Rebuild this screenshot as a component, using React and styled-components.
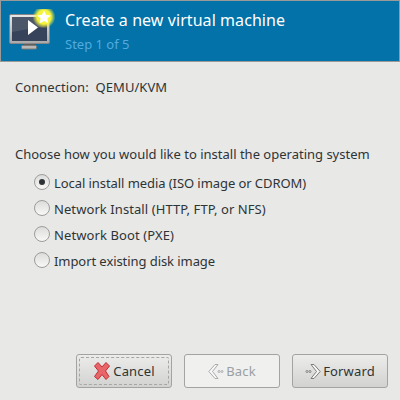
import React from 'react'
import styled, { createGlobalStyle } from 'styled-components'

const GlobalStyle = createGlobalStyle`
  html, body {
    margin: 0;
    padding: 0;
    background: #e8e8e7;
  }
`

const OPTIONS = [
  { label: 'Local install media (ISO image or CDROM)', checked: true, tracking: -0.07 },
  { label: 'Network Install (HTTP, FTP, or NFS)', tracking: 0.08 },
  { label: 'Network Boot (PXE)', tracking: 0.1 },
  { label: 'Import existing disk image', tracking: -0.07 },
]

const Window = styled.div`
  width: 400px;
  height: 400px;
  box-sizing: border-box;
  display: flex;
  flex-direction: column;
  background: #e8e8e7;
  color: #2e3436;
  font-family: 'Noto Sans', sans-serif;
  font-size: 13px;
  overflow: hidden;
`
const Header = styled.header`
  height: 60px;
  flex: none;
  margin: 1px 1px 0;
  display: flex;
  align-items: center;
  gap: 8px;
  padding-left: 8px;
  background: #0272a8;
  box-shadow: 0 0 0 1px #9a9a98;
`
const HeaderText = styled.div`
  display: flex;
  flex-direction: column;
  gap: 4px;
  margin-top: -1px;
`
const Title = styled.div`
  color: #fff;
  font-size: 16px;
  line-height: 22px;
  letter-spacing: 0.07px;
`
const Step = styled.div`
  color: #52abe0;
  font-size: 13px;
  line-height: 18px;
`
const Body = styled.main`
  flex: 1;
  display: flex;
  flex-direction: column;
  padding: 0 15px;
`
const Connection = styled.div`
  margin-top: 17px;
  line-height: 18px;
  white-space: pre;
  letter-spacing: 0.05px;
`
const Prompt = styled.div`
  margin-top: 49px;
  line-height: 18px;
`
const OptionList = styled.div`
  display: flex;
  flex-direction: column;
  gap: 8px;
  margin-top: 10px;
  padding-left: 19px;
`
const Option = styled.label`
  display: flex;
  align-items: center;
  gap: 4px;
  height: 18px;
  line-height: 18px;
`
const OptionLabel = styled.span`
  padding-top: 2px;
  letter-spacing: ${(p) => p.$tracking}px;
`
const Radio = styled.span`
  width: 16px;
  height: 16px;
  box-sizing: border-box;
  flex: none;
  display: flex;
  align-items: center;
  justify-content: center;
  border: 1px solid #9c9c9a;
  border-radius: 50%;
  background: linear-gradient(#dcdcda, #f8f8f7);
  &::after {
    content: '';
    display: ${(p) => (p.$checked ? 'block' : 'none')};
    width: 6px;
    height: 6px;
    border-radius: 50%;
    background: #2e3436;
  }
`
const Footer = styled.footer`
  flex: none;
  display: flex;
  justify-content: flex-end;
  gap: 12px;
  padding: 0 12px 12px 0;
`
const Button = styled.button`
  position: relative;
  width: 96px;
  height: 34px;
  box-sizing: border-box;
  display: flex;
  align-items: center;
  justify-content: center;
  gap: 2px;
  padding: 0;
  border: 1px solid #a3a3a0;
  border-radius: 3px;
  background: ${(p) =>
    p.disabled ? '#f0f0ef' : 'linear-gradient(#ececeb, #d2d2d0)'};
  color: ${(p) => (p.disabled ? '#9aa0a2' : '#2e3436')};
  font-family: inherit;
  font-size: 13px;
  letter-spacing: 0.15px;
  &::after {
    content: '';
    display: ${(p) => (p.$focused ? 'block' : 'none')};
    position: absolute;
    inset: 2px;
    border: 1px dashed #a6a6a4;
    border-radius: 2px;
  }
`

const MachineIcon = () => (
  <svg width="48" height="44" viewBox="0 0 48 44">
    <defs>
      <linearGradient id="bezel" x1="0" y1="0" x2="0" y2="1">
        <stop offset="0" stopColor="#e8e8e6" />
        <stop offset="1" stopColor="#a8a8a6" />
      </linearGradient>
      <radialGradient id="glow">
        <stop offset="0.6" stopColor="#f6f43a" />
        <stop offset="1" stopColor="#f6f43a" stopOpacity="0" />
      </radialGradient>
    </defs>
    <rect x="0.5" y="5.5" width="40" height="29" rx="1.5" fill="url(#bezel)" stroke="#85858a" />
    <rect x="3" y="8" width="35" height="24" fill="#36435a" />
    <path d="M3 8H38V17Q20 20 3 23Z" fill="#4c586a" />
    <path d="M19 11L29 18.5L19 26Z" fill="#fff" />
    <rect x="15" y="35" width="11" height="2" fill="#5f5f5d" />
    <rect x="12.5" y="36.5" width="15" height="3.5" rx="1" fill="#b8b8b6" stroke="#7a7a78" />
    <circle cx="35" cy="8" r="11.5" fill="url(#glow)" />
    <path d="M35 1.5L37.1 5.8L41.8 6.4L38.4 9.6L39.3 14.2L35 12L30.7 14.2L31.6 9.6L28.2 6.4L32.9 5.8Z" fill="#fff" />
  </svg>
)

const CancelIcon = () => (
  <svg width="18" height="20" viewBox="0 0 18 20">
    <path
      d="M1.5 5L5 1.5L9 6L13 1.5L16.5 5L12.5 10L16 15.5L13 18.5L9 13.5L5 18.5L1.5 15.5L5.5 10Z"
      fill="#e8666a"
      stroke="#c22f33"
    />
  </svg>
)

const BackIcon = () => (
  <svg width="16" height="15" viewBox="0 0 16 15" fill="#f7f7f6" stroke="#a8acad">
    <path d="M7 0.5L0.8 7.5L7 14.5L10 14.5L4.5 7.5L10 0.5Z" />
    <circle cx="11" cy="7.5" r="1" />
    <circle cx="14" cy="7.5" r="1" />
  </svg>
)

const ForwardIcon = () => (
  <svg width="16" height="15" viewBox="0 0 16 15" fill="#f7f7f6" stroke="#7d7d7b">
    <circle cx="2" cy="7.5" r="1" />
    <circle cx="5" cy="7.5" r="1" />
    <path d="M9 0.5L15.2 7.5L9 14.5L6 14.5L11.5 7.5L6 0.5Z" />
  </svg>
)

const App = () => {
  return (
    <Window>
      <GlobalStyle />
      <Header>
        <MachineIcon />
        <HeaderText>
          <Title>Create a new virtual machine</Title>
          <Step>Step 1 of 5</Step>
        </HeaderText>
      </Header>
      <Body>
        <Connection>Connection:  QEMU/KVM</Connection>
        <Prompt>Choose how you would like to install the operating system</Prompt>
        <OptionList>
          {OPTIONS.map((option) => (
            <Option key={option.label}>
              <Radio $checked={option.checked} />
              <OptionLabel $tracking={option.tracking}>{option.label}</OptionLabel>
            </Option>
          ))}
        </OptionList>
      </Body>
      <Footer>
        <Button $focused>
          <CancelIcon />
          Cancel
        </Button>
        <Button disabled>
          <BackIcon />
          Back
        </Button>
        <Button>
          <ForwardIcon />
          Forward
        </Button>
      </Footer>
    </Window>
  )
}

export default App
